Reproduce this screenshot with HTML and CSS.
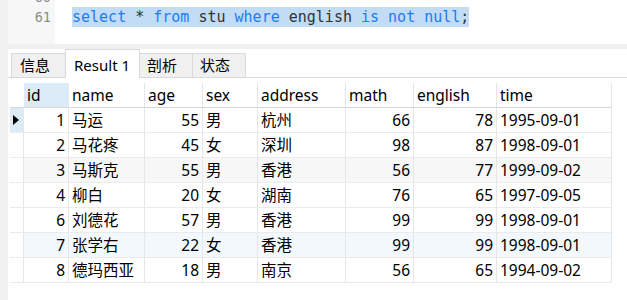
FILE: index.html
```html
<!DOCTYPE html>
<html lang="zh-CN">
<head>
  <meta charset="UTF-8" />
  <title>Query Result</title>
  <link rel="stylesheet" href="styles.css">
</head>
<body>
  <div class="app">
    <div class="side"></div>
    <div class="main">
      <!-- SQL editor -->
      <div class="editor">
        <div class="gutter">
          <div class="ln">60</div>
          <div class="ln">61</div>
        </div>
        <div class="code">
          <div class="line"></div>
          <div class="line"><span class="sel"><span class="kw">select</span> * <span class="kw">from</span> stu <span class="kw">where</span> english <span class="kw">is</span> <span class="kw">not</span> <span class="kw">null</span>;</span></div>
        </div>
      </div>
      <div class="split"></div>

      <!-- result tabs -->
      <div class="tabs">
        <div class="tab">信息</div>
        <div class="tab active">Result 1</div>
        <div class="tab">剖析</div>
        <div class="tab">状态</div>
      </div>

      <!-- result grid -->
      <div class="grid">
        <div class="cell head ind"></div>
        <div class="cell head cur">id</div>
        <div class="cell head">name</div>
        <div class="cell head">age</div>
        <div class="cell head">sex</div>
        <div class="cell head">address</div>
        <div class="cell head">math</div>
        <div class="cell head">english</div>
        <div class="cell head">time</div>

        <div class="cell ind sel-row"><span class="arrow"></span></div>
        <div class="cell num">1</div><div class="cell">马运</div><div class="cell num">55</div><div class="cell">男</div><div class="cell">杭州</div><div class="cell num">66</div><div class="cell num">78</div><div class="cell">1995-09-01</div>

        <div class="cell ind"></div>
        <div class="cell num">2</div><div class="cell">马花疼</div><div class="cell num">45</div><div class="cell">女</div><div class="cell">深圳</div><div class="cell num">98</div><div class="cell num">87</div><div class="cell">1998-09-01</div>

        <div class="cell ind"></div>
        <div class="cell num gray">3</div><div class="cell gray">马斯克</div><div class="cell num gray">55</div><div class="cell gray">男</div><div class="cell gray">香港</div><div class="cell num gray">56</div><div class="cell num gray">77</div><div class="cell gray">1999-09-02</div>

        <div class="cell ind"></div>
        <div class="cell num">4</div><div class="cell">柳白</div><div class="cell num">20</div><div class="cell">女</div><div class="cell">湖南</div><div class="cell num">76</div><div class="cell num">65</div><div class="cell">1997-09-05</div>

        <div class="cell ind"></div>
        <div class="cell num">6</div><div class="cell">刘德花</div><div class="cell num">57</div><div class="cell">男</div><div class="cell">香港</div><div class="cell num">99</div><div class="cell num">99</div><div class="cell">1998-09-01</div>

        <div class="cell ind"></div>
        <div class="cell num hover">7</div><div class="cell hover">张学右</div><div class="cell num hover">22</div><div class="cell hover">女</div><div class="cell hover">香港</div><div class="cell num hover">99</div><div class="cell num hover">99</div><div class="cell hover">1998-09-01</div>

        <div class="cell ind"></div>
        <div class="cell num">8</div><div class="cell">德玛西亚</div><div class="cell num">18</div><div class="cell">男</div><div class="cell">南京</div><div class="cell num">56</div><div class="cell num">65</div><div class="cell">1994-09-02</div>
      </div>
    </div>
  </div>
</body>
</html>
```

FILE: styles.css
```css
body {
  margin: 0;
  padding: 0;
  background: #fff;
  font-family: 'Noto Sans', 'Noto Sans CJK SC', sans-serif;
  color: #000;
  overflow: hidden;
}

.app {
  display: flex;
  width: 627px;
  height: 300px;
}

.side {
  width: 8px;
  flex-shrink: 0;
  background: #f0f0f0;
}

.main {
  flex: 1;
  display: flex;
  flex-direction: column;
  min-width: 0;
}

/* editor */
.editor {
  height: 44px;
  overflow: hidden;
  display: flex;
  background: #fff;
}

.gutter {
  width: 47px;
  flex-shrink: 0;
  background: #f7f7f7;
  text-align: right;
  padding-right: 4px;
  box-sizing: border-box;
  margin-top: -13px;
}

.ln {
  height: 20px;
  line-height: 20px;
  font-family: 'DejaVu Sans Mono', monospace;
  font-size: 13.5px;
  color: #8c8c8c;
}

.code {
  padding-left: 17px;
  margin-top: -13px;
}

.line {
  height: 20px;
  line-height: 20px;
  font-family: 'DejaVu Sans Mono', monospace;
  font-size: 15px;
  color: #333;
  white-space: pre;
}

.sel {
  display: inline-block;
  height: 20px;
  background: #c2dcf6;
}

.kw {
  color: #1c7cf0;
}

.split {
  height: 5px;
  background: #f0f0f0;
}

/* tabs */
.tabs {
  height: 28px;
  display: flex;
  align-items: flex-end;
  padding-left: 3px;
  border-bottom: 1px solid #d9d9d9;
}

.tab {
  height: 24px;
  line-height: 23px;
  padding: 0 15px 0 7px;
  margin-right: -1px;
  border: 1px solid #d9d9d9;
  border-bottom: none;
  box-sizing: border-box;
  background: #f0f0f0;
  font-size: 15px;
  color: #000;
}

.tab:first-child {
  padding-left: 8px;
}

.tab.active {
  height: 29px;
  line-height: 30px;
  margin-bottom: -1px;
  padding: 0 9px 0 8px;
  background: #fff;
  position: relative;
  z-index: 1;
}

/* grid */
.grid {
  margin-top: 5px;
  margin-left: 2px;
  display: grid;
  grid-template-columns: 14px 45px 76px 58px 55px 88px 68px 83px 115px;
  width: 602px;
}

.cell {
  height: 25px;
  line-height: 24px;
  box-sizing: border-box;
  border-right: 1px solid #e6e6e6;
  border-bottom: 1px solid #ebebeb;
  padding: 0 3px;
  font-size: 15.5px;
  white-space: nowrap;
  overflow: hidden;
}

.cell.head {
  border-bottom-color: #d6d6d6;
}

.cell.cur {
  background: #dcebf8;
}

.cell.num {
  text-align: right;
}

.cell.ind {
  padding: 0;
  display: flex;
  align-items: center;
  justify-content: center;
}

.cell.head.ind {
  border-right-color: #fff;
}

.sel-row {
  background: #dcebf8;
}

.arrow {
  width: 0;
  height: 0;
  border-top: 5px solid transparent;
  border-bottom: 5px solid transparent;
  border-left: 6px solid #000;
  margin-left: -2px;
}

.gray {
  background: #f7f7f7;
}

.hover {
  background: #f3f8fd;
}
```
